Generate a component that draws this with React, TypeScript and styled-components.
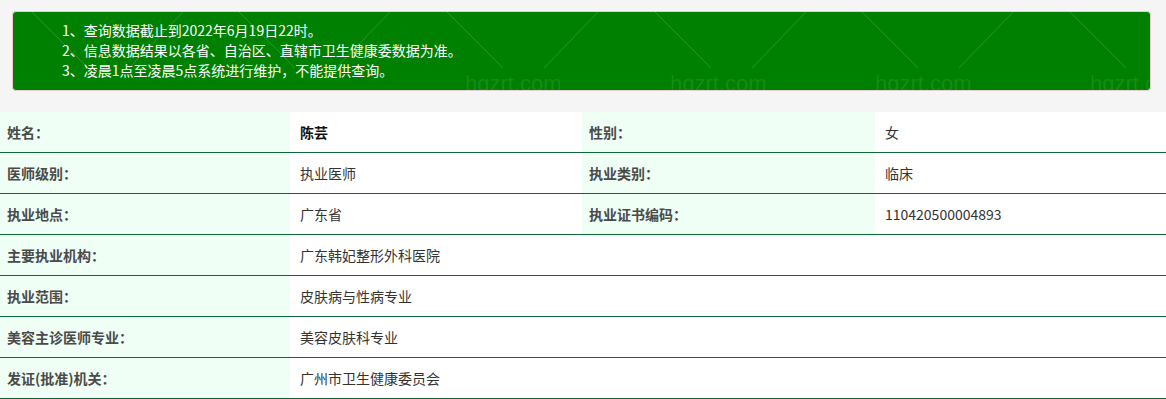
import React from 'react'
import styled, { createGlobalStyle } from 'styled-components'

const GlobalStyle = createGlobalStyle`
    html, body {
        margin: 0;
        padding: 0;
        background: #f5f5f5;
        font-family: "Microsoft YaHei", "Noto Sans CJK SC", "Noto Sans", sans-serif;
    }
`

const Page = styled.div`
    width: 1166px;
    display: flex;
    flex-direction: column;
`

const NoticeWrap = styled.div`
    padding: 11px 15px 21px 12px;
`

const Notice = styled.div`
    position: relative;
    overflow: hidden;
    background: #008000;
    border: 1px solid #ebccd1;
    border-radius: 4px;
    padding: 8px 10px 10px 49px;
`

const NoticeLine = styled.p`
    margin: 0;
    color: #fff;
    font-size: 14px;
    line-height: 20px;
    position: relative;
    z-index: 1;
`

const Watermark = styled.svg`
    position: absolute;
    left: 0;
    top: 0;
    width: 100%;
    height: 100%;
    pointer-events: none;
`

const Table = styled.div`
    display: grid;
    grid-template-columns: 290px 292px 293px 1fr;
    background: #fff;
`

const Cell = styled.div<{ label?: boolean; span?: number; strong?: boolean }>`
    grid-column: span ${({ span }) => span || 1};
    height: 40px;
    display: flex;
    align-items: center;
    padding-left: ${({ label }) => (label ? '7px' : '10px')};
    border-bottom: 1px solid #0b6a36;
    background: ${({ label }) => (label ? '#effff5' : '#fff')};
    color: ${({ label, strong }) => (strong ? '#111' : label ? '#4a4a4a' : '#333')};
    font-weight: ${({ label, strong }) => (label || strong ? 'bold' : 'normal')};
    font-size: 14px;
    white-space: nowrap;
`

const notes = [
    '1、查询数据截止到2022年6月19日22时。',
    '2、信息数据结果以各省、自治区、直辖市卫生健康委数据为准。',
    '3、凌晨1点至凌晨5点系统进行维护，不能提供查询。',
]

const pairs: [string, string, string, string][] = [
    ['姓名：', '陈芸', '性别：', '女'],
    ['医师级别：', '执业医师', '执业类别：', '临床'],
    ['执业地点：', '广东省', '执业证书编码：', '110420500004893'],
]

const wide: [string, string][] = [
    ['主要执业机构：', '广东韩妃整形外科医院'],
    ['执业范围：', '皮肤病与性病专业'],
    ['美容主诊医师专业：', '美容皮肤科专业'],
    ['发证(批准)机关：', '广州市卫生健康委员会'],
]

// watermark tiles on the notice box
const tiles = [-7, 200, 408, 616, 823, 1031]
const marks = [452, 657, 862, 1077]

export default function App() {
    return (
        <Page>
            <GlobalStyle />
            <NoticeWrap>
                <Notice>
                    <Watermark>
                        {tiles.map(x => (
                            <g key={x} stroke="rgba(255,255,255,0.16)" strokeWidth="1" fill="none">
                                <line x1={x + 26} y1={0} x2={x + 82} y2={56} />
                                <line x1={x + 177} y1={0} x2={x + 123} y2={56} />
                            </g>
                        ))}
                        {marks.map(x => (
                            <text key={x} x={x} y={79} fill="rgba(255,255,255,0.1)" fontSize="22" fontFamily="Liberation Sans, sans-serif">
                                hgzrt.com
                            </text>
                        ))}
                    </Watermark>
                    {notes.map(n => (
                        <NoticeLine key={n}>{n}</NoticeLine>
                    ))}
                </Notice>
            </NoticeWrap>
            <Table>
                {pairs.map(([a, b, c, d], i) => (
                    <React.Fragment key={a}>
                        <Cell label>{a}</Cell>
                        <Cell strong={i === 0}>{b}</Cell>
                        <Cell label>{c}</Cell>
                        <Cell>{d}</Cell>
                    </React.Fragment>
                ))}
                {wide.map(([a, b]) => (
                    <React.Fragment key={a}>
                        <Cell label>{a}</Cell>
                        <Cell span={3}>{b}</Cell>
                    </React.Fragment>
                ))}
            </Table>
        </Page>
    )
}
